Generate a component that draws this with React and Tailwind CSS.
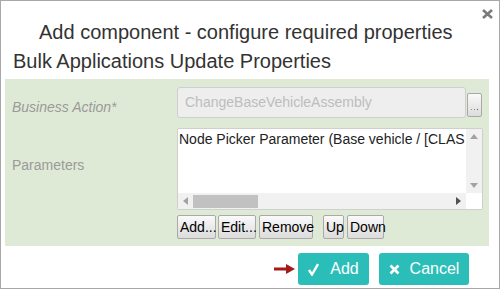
import React from 'react';

// Small grey push button used under the parameter list
const SmallButton = ({ children, className = '' }) => (
  <button
    className={`h-[24px] rounded-[2px] border border-[#a9a9a9] bg-gradient-to-b from-[#fafafa] to-[#dcdcdc] px-[2px] text-[14px] leading-none text-black ${className}`}
  >
    {children}
  </button>
);

const Triangle = ({ dir }) => {
  const pts = {
    up: '0,5 4,0 8,5',
    down: '0,0 8,0 4,5',
    left: '5,0 5,8 0,4',
    right: '0,0 0,8 5,4',
  }[dir];
  const size = dir === 'up' || dir === 'down' ? { w: 8, h: 5 } : { w: 5, h: 8 };
  return (
    <svg width={size.w} height={size.h} viewBox={`0 0 ${size.w} ${size.h}`}>
      <polygon points={pts} fill={dir === 'right' ? '#505050' : '#a3a3a3'} />
    </svg>
  );
};

export default function App() {
  return (
    <div
      className="relative h-[289px] w-[500px] border border-[#a8a8a8] bg-white text-[#333]"
      style={{ fontFamily: '"Liberation Sans", Arial, sans-serif' }}
    >
      {/* Close icon */}
      <svg className="absolute right-[6px] top-[8px]" width="11" height="10" viewBox="0 0 11 10">
        <path d="M1 1 L10 9 M10 1 L1 9" stroke="#7a7a7a" strokeWidth="2.6" />
      </svg>

      {/* Titles */}
      <div className="pt-[19px] pl-[38px] text-[20px] leading-[24px] text-[#333]">
        Add component - configure required properties
      </div>
      <div className="mt-[5px] pl-[12px] text-[20px] leading-[24px] text-[#333]">
        Bulk Applications Update Properties
      </div>

      {/* Green properties panel */}
      <div className="ml-[4px] mt-[6px] h-[167px] w-[484px] bg-[#dfead6] pt-[8px]">
        <div className="flex h-[31px] items-center">
          <div className="w-[172px] pl-[7px] pt-[10px] text-[14px] italic text-[#9a9a9a]">Business Action*</div>
          <div className="flex h-[31px] w-[289px] items-center rounded-[3px] border border-[#cfcfcf] bg-[#eeeeee] pl-[7px] text-[14px] text-[#bdbdbd]">
            ChangeBaseVehicleAssembly
          </div>
          <div className="ml-[1px] mt-[5px] flex h-[24px] w-[15px] items-end justify-center rounded-[2px] border border-[#a9a9a9] bg-gradient-to-b from-[#fafafa] to-[#dcdcdc] pb-[6px]">
            <div className="flex gap-[2px]">
              <span className="h-[1px] w-[1px] bg-[#c77]" />
              <span className="h-[1px] w-[1px] bg-[#77c]" />
              <span className="h-[1px] w-[1px] bg-[#555]" />
            </div>
          </div>
        </div>

        <div className="mt-[10px] flex">
          <div className="flex h-[82px] w-[172px] items-center pl-[7px] pb-[8px] text-[14px] text-[#9a9a9a]">
            Parameters
          </div>
          <div>
            <div className="flex h-[82px] w-[306px] flex-col overflow-hidden rounded-[2px] border border-[#cfcfcf] bg-white">
              <div className="flex flex-1">
                <div className="flex-1 overflow-hidden whitespace-nowrap pl-[1px] pt-[1px] text-[14px] leading-[18px] text-[#222]">
                  Node Picker Parameter (Base vehicle / [CLAS
                </div>
                <div className="flex w-[16px] flex-col items-center justify-between bg-[#f1f1f1] py-[5px]">
                  <Triangle dir="up" />
                  <Triangle dir="down" />
                </div>
              </div>
              <div className="flex h-[16px]">
                <div className="flex flex-1 items-center bg-[#f1f1f1]">
                  <div className="flex w-[15px] justify-center">
                    <Triangle dir="left" />
                  </div>
                  <div className="h-[13px] w-[65px] bg-[#c1c1c1]" />
                  <div className="flex-1" />
                  <div className="flex w-[15px] justify-center">
                    <Triangle dir="right" />
                  </div>
                </div>
                <div className="w-[16px] bg-white" />
              </div>
            </div>

            <div className="mt-[5px] flex">
              <SmallButton className="w-[39px]">Add...</SmallButton>
              <SmallButton className="ml-[2px] w-[38px]">Edit...</SmallButton>
              <SmallButton className="ml-[3px] w-[54px]">Remove</SmallButton>
              <SmallButton className="ml-[10px] w-[21px]">Up</SmallButton>
              <SmallButton className="ml-[3px] w-[37px]">Down</SmallButton>
            </div>
          </div>
        </div>
      </div>

      {/* Footer actions */}
      <div className="mt-[7px] flex items-center">
        <svg className="ml-[273px]" width="22" height="10" viewBox="0 0 22 10">
          <rect x="0" y="3.5" width="13" height="3" fill="#a31b1b" />
          <polygon points="12,0 21,5 12,10" fill="#a31b1b" />
        </svg>
        <button className="ml-[2px] flex h-[32px] w-[71px] items-center justify-center gap-[11px] rounded-[3px] bg-[#2bbeb8] text-[16px] text-white">
          <svg width="11" height="13" viewBox="0 0 11 13">
            <path d="M1 7 L4 11.5 L10 1" stroke="white" strokeWidth="2.4" fill="none" />
          </svg>
          Add
        </button>
        <button className="ml-[10px] flex h-[32px] w-[90px] items-center justify-center gap-[10px] rounded-[3px] bg-[#2bbeb8] text-[16px] text-white">
          <svg width="11" height="11" viewBox="0 0 11 11">
            <path d="M1.5 1.5 L9.5 9.5 M9.5 1.5 L1.5 9.5" stroke="white" strokeWidth="2.6" />
          </svg>
          Cancel
        </button>
      </div>
    </div>
  );
}
